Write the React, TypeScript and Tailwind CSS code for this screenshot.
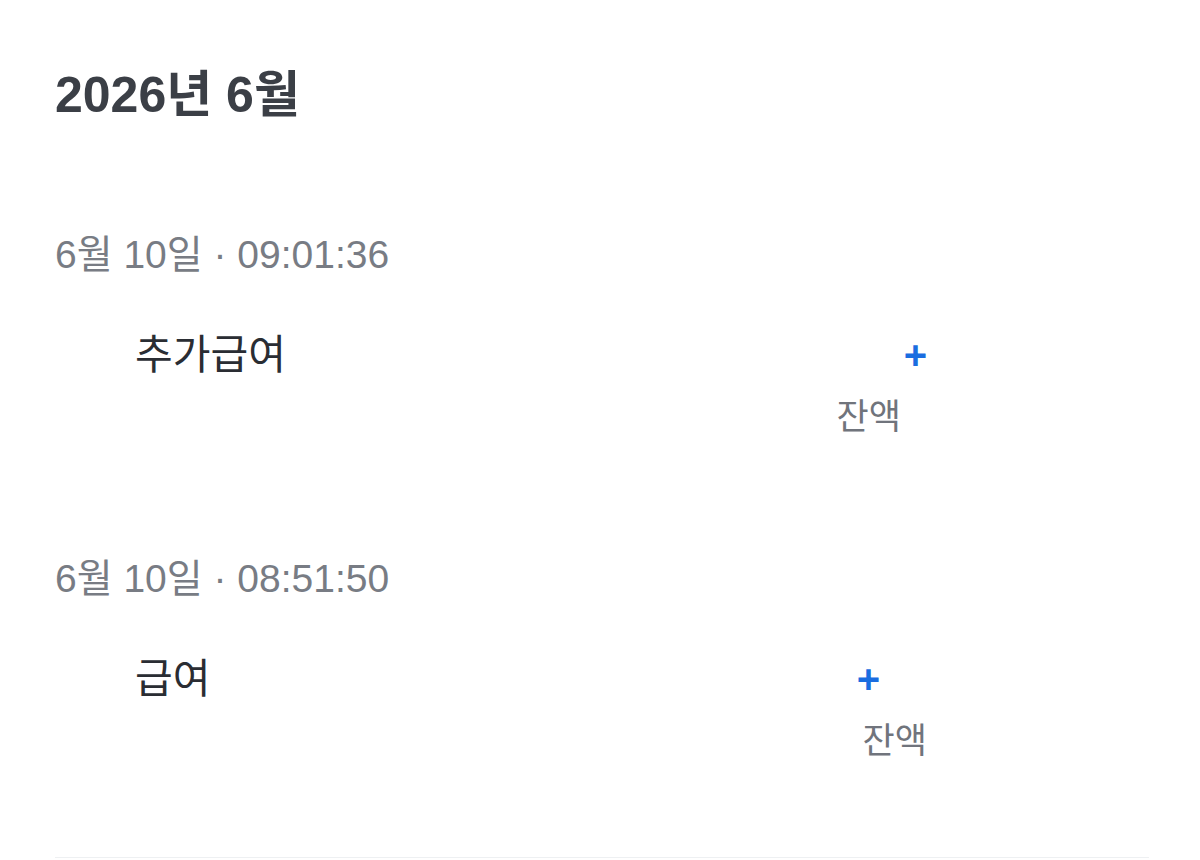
import React from "react";

const font = {
  fontFamily: '"Liberation Sans", "Noto Sans CJK KR", sans-serif',
};

type Tx = {
  date: string;
  title: string;
  plusGap: number;
  balanceGap: number;
};

const txs: Tx[] = [
  { date: "6월 10일 · 09:01:36", title: "추가급여", plusGap: 222, balanceGap: 248 },
  { date: "6월 10일 · 08:51:50", title: "급여", plusGap: 269, balanceGap: 222 },
];

function TxItem({ tx, first }: { tx: Tx; first: boolean }) {
  return (
    <div className={first ? "mt-[115px]" : "mt-[121px]"}>
      <div className="text-[39px] leading-[39px] text-[#787c84]">{tx.date}</div>
      <div className="mt-[59px] flex items-start justify-between">
        <div className="pl-[80px] text-[41px] leading-[44px] text-[#2a2d33]">{tx.title}</div>
        <div className="flex flex-col items-end">
          <div className="flex h-[44px] items-center">
            <span className="text-[40px] font-bold leading-none text-[#1a6de0]">+</span>
            <span style={{ width: tx.plusGap }} />
          </div>
          <div className="mt-[17px] flex h-[44px] items-center">
            <span className="text-[35px] leading-none text-[#70747c]">잔액</span>
            <span style={{ width: tx.balanceGap }} />
          </div>
        </div>
      </div>
    </div>
  );
}

export default function App() {
  return (
    <div className="min-h-[860px] bg-white pl-[55px] pr-[51px]" style={font}>
      <h1 className="pt-[70px] text-[50px] font-bold leading-[50px] text-[#3b3f46]">2026년 6월</h1>
      {txs.map((tx, i) => (
        <TxItem key={i} tx={tx} first={i === 0} />
      ))}
      <div className="mt-[95px] border-b border-[#eef0f2]" />
    </div>
  );
}
